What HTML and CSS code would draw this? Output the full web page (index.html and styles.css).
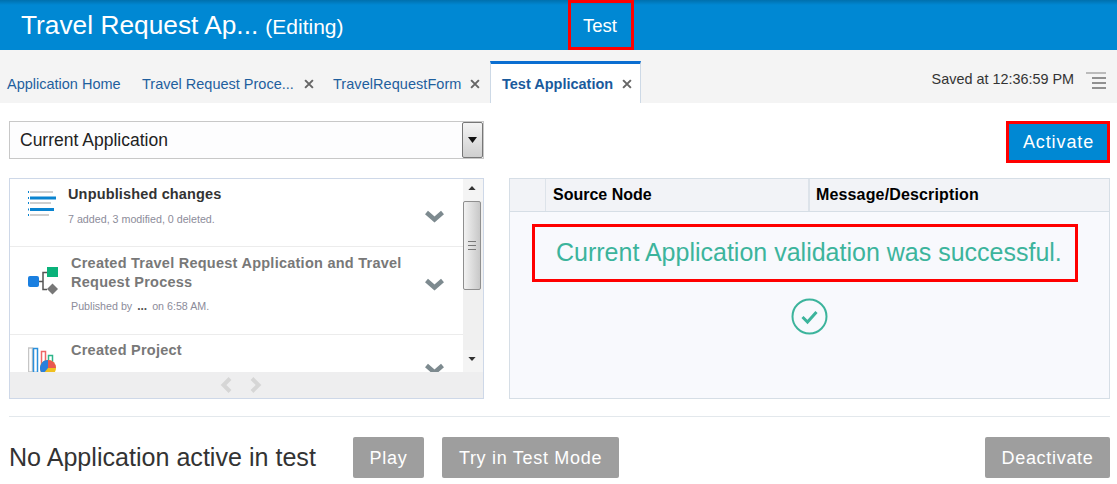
FILE: index.html
```html
<!DOCTYPE html>
<html lang="en">
<head>
<meta charset="utf-8">
<title>Test Application</title>
<link rel="stylesheet" href="styles.css">
</head>
<body>
<header class="appbar">
  <div class="appbar-title"><span class="app-name">Travel Request Ap...</span><span class="app-state">(Editing)</span></div>
  <div class="appbar-test">Test</div>
</header>
<nav class="tabs">
  <a class="tab tab-home">Application Home</a>
  <a class="tab tab-process">Travel Request Proce...<svg class="tab-x" viewBox="0 0 9 9"><path d="M1 1l7 7M8 1l-7 7"/></svg></a>
  <a class="tab tab-form">TravelRequestForm<svg class="tab-x" viewBox="0 0 9 9"><path d="M1 1l7 7M8 1l-7 7"/></svg></a>
  <a class="tab tab-active">Test Application<svg class="tab-x" viewBox="0 0 9 9"><path d="M1 1l7 7M8 1l-7 7"/></svg></a>
  <div class="tabs-right">
    <span class="saved">Saved at 12:36:59 PM</span>
    <svg class="menu-icon" width="20" height="17" viewBox="0 0 20 17"><path class="menu-top" d="M0 1h20"/><path d="M6 6h14M6 11h14M6 16h14"/></svg>
  </div>
</nav>
<main class="content">
  <div class="top-row">
    <div class="select">
      <span class="select-text">Current Application</span>
      <span class="select-btn"><svg width="9" height="6" viewBox="0 0 9 6"><path d="M0 0h9L4.500 6z"/></svg></span>
    </div>
    <button class="activate">Activate</button>
  </div>
  <div class="panels">
    <section class="history">
      <div class="history-body">
        <div class="history-list">
          <div class="item item-first">
            <svg class="item-icon" width="29" height="26" viewBox="0 0 29 26">
              <path class="l-g" d="M2 1h23M2 12h21M2 24h19"/>
              <path class="l-b" d="M2 7h26M2 18.500h24"/>
              <path class="l-d" d="M0 1h1M0 7h1M0 12h1M0 18.500h1M0 24h1"/>
            </svg>
            <div class="item-text">
              <h3 class="item-title item-title-dark">Unpublished changes</h3>
              <p class="item-sub">7 added, 3 modified, 0 deleted.</p>
            </div>
            <svg class="chev" width="21" height="13" viewBox="0 0 21 13"><path d="M2.500 2.500l8 7 8-7"/></svg>
          </div>
          <div class="item item-second">
            <svg class="item-icon" width="30" height="29" viewBox="0 0 30 29">
              <path class="conn" d="M11 14.500H15V5.500H19M15 14.500V22.500H19"/>
              <rect x="0" y="9" width="11" height="11" rx="2" fill="#1a7fe0"/>
              <rect x="19" y="0" width="11" height="10" fill="#0ab27a"/>
              <path d="M24.500 16.500l5.500 5.500-5.500 5.500-5.500-5.500z" fill="#777"/>
            </svg>
            <div class="item-text">
              <h3 class="item-title">Created Travel Request Application and Travel Request Process</h3>
              <p class="item-sub item-sub-pub">Published by <b class="dots">...</b> on 6:58 AM.</p>
            </div>
            <svg class="chev chev-second" width="21" height="13" viewBox="0 0 21 13"><path d="M2.500 2.500l8 7 8-7"/></svg>
          </div>
          <div class="item item-third">
            <svg class="item-icon" width="30" height="29" viewBox="0 0 30 29">
              <path class="bar-g" d="M.500 1h4v24h-4z"/>
              <path class="bar-b" d="M5.500 1.500h4v24h-4z"/>
              <path class="bar-r" d="M13.500 4.500h4v20h-4z"/>
              <path class="bar-t" d="M20.500 8.500h4v16h-4z"/>
              <circle cx="20" cy="21" r="8" fill="#f0c020"/>
              <path d="M20 21V13a8 8 0 0 1 8 8z" fill="#e9574f"/>
              <path d="M20 13a8 8 0 0 0-5 14.200L20 21z" fill="#2a7fdc"/>
            </svg>
            <div class="item-text">
              <h3 class="item-title">Created Project</h3>
            </div>
            <svg class="chev chev-third" width="21" height="13" viewBox="0 0 21 13"><path d="M2.500 2.500l8 7 8-7"/></svg>
          </div>
        </div>
        <div class="scrollbar">
          <span class="sb-arrow"><svg width="8" height="4" viewBox="0 0 9 5"><path d="M4.500 0L9 5H0z"/></svg></span>
          <span class="sb-thumb"><svg width="8" height="9" viewBox="0 0 8 9"><path d="M0 .5h8M0 4.500h8M0 8.500h8"/></svg></span>
          <span class="sb-track"></span>
          <span class="sb-arrow"><svg width="8" height="4" viewBox="0 0 9 5"><path d="M0 0h9L4.500 5z"/></svg></span>
        </div>
      </div>
      <div class="history-foot">
        <svg width="14" height="18" viewBox="0 0 14 18"><path d="M11 2.500L4.500 9l6.500 6.500"/></svg>
        <svg width="14" height="18" viewBox="0 0 14 18"><path d="M3 2.500L9.500 9 3 15.500"/></svg>
      </div>
    </section>
    <section class="results">
      <div class="results-head">
        <div class="col col-blank"></div>
        <div class="col col-source">Source Node</div>
        <div class="col col-message">Message/Description</div>
      </div>
      <div class="results-body">
        <div class="success-msg">Current Application validation was successful.</div>
        <svg class="success-icon" width="37" height="37" viewBox="0 0 37 37"><circle cx="18.500" cy="18.500" r="17"/><path class="tick" d="M11.500 19l5 5 9-10"/></svg>
      </div>
    </section>
  </div>
  <div class="bottom-row">
    <span class="no-app">No Application active in test</span>
    <button class="gray-btn btn-play">Play</button>
    <button class="gray-btn btn-try">Try in Test Mode</button>
    <button class="gray-btn btn-deactivate">Deactivate</button>
  </div>
</main>
</body>
</html>
```
FILE: styles.css
```css
* { box-sizing: border-box; }
html, body { margin: 0; padding: 0; }
body { width: 1117px; height: 484px; overflow: hidden; background: #fff; font-family: "Liberation Sans", Arial, sans-serif; }

.appbar { height: 50px; display: flex; background: linear-gradient(#0070ad 0, #0088d3 5px, #0088d3 100%); color: #fff; }
.appbar-title { width: 568px; padding: 10px 0 0 21px; display: flex; align-items: baseline; white-space: nowrap; }
.app-name { font-size: 26.300px; }
.app-state { font-size: 21px; margin-left: 7px; }
.appbar-test { width: 66px; height: 50px; border: 3px solid #f00; font-size: 18.500px; padding: 1px 2px 0 0; display: flex; align-items: center; justify-content: center; }

.tabs { height: 53px; background: #f4f4f4; display: flex; align-items: flex-end; position: relative; }
.tab { height: 42px; padding-top: 4px; display: flex; align-items: center; font-size: 14.500px; color: #1f5f9e; white-space: nowrap; }
.tab-home { margin-left: 7px; width: 135px; }
.tab-process { width: 191px; }
.tab-form { width: 157px; letter-spacing: .05px; }
.tab-active { width: 151px; padding: 0 0 0 11px; background: #fff; border-top: 3px solid #0a6ed1; border-left: 1px solid #cdd9e6; border-right: 1px solid #cdd9e6; font-weight: bold; color: #195a9c; }
.tab-x { width: 10px; height: 10px; margin-left: 9px; fill: none; stroke: #666; stroke-width: 1.800; }
.tab-process .tab-x { margin-left: 10px; }
.tabs-right { margin-left: auto; height: 53px; display: flex; align-items: flex-start; padding: 21px 11px 0 0; }
.saved { font-size: 14.400px; color: #333; line-height: 17px; }
.menu-icon { margin: 1px 0 0 12px; fill: none; stroke: #909090; stroke-width: 2; }
.menu-top { stroke: #bbb; }

.content { padding: 0 7px 0 9px; }
.top-row { height: 75px; display: flex; justify-content: space-between; align-items: flex-start; padding-top: 18px; }
.select { width: 475px; height: 38px; border: 1px solid #c8c8c8; background: #fdfdfe; display: flex; align-items: center; justify-content: space-between; padding-left: 10px; }
.select-text { font-size: 17.500px; color: #222; }
.select-btn { width: 21px; height: 36px; border: 1px solid #777; border-radius: 2px; background: linear-gradient(#f4f4f4, #cfcfcf); display: flex; align-items: center; justify-content: center; }
.select-btn svg path { fill: #111; }
.activate { width: 104px; height: 42px; border: 3px solid #f00; background: #0088d3; color: #fff; font: 18px "Liberation Sans", Arial, sans-serif; letter-spacing: .9px; padding: 0 0 0 1px; }

.panels { display: flex; justify-content: space-between; height: 221px; }
.history { width: 475px; border: 1px solid #ced8e8; display: flex; flex-direction: column; }
.history-body { height: 193px; display: flex; overflow: hidden; }
.history-list { flex: 1; min-width: 0; }
.item { position: relative; display: flex; border-bottom: 1px solid #ececec; padding-left: 18px; }
.item-first { height: 68px; }
.item-second { height: 88px; }
.item-third { height: 60px; border-bottom: 0; }
.item-icon { flex: none; }
.item-first .item-icon { margin-top: 12px; }
.item-second .item-icon { margin-top: 20px; }
.item-third .item-icon { margin-top: 12px; }
.l-g, .l-b, .l-d { fill: none; }
.l-g { stroke: #cfcfcf; stroke-width: 2; }
.l-b { stroke: #0a84d0; stroke-width: 3; }
.l-d { stroke: #0a84d0; stroke-width: 2; }
.conn { fill: none; stroke: #555; stroke-width: 1.500; }
.bar-g, .bar-b, .bar-r, .bar-t { fill: none; stroke-width: 1.500; }
.bar-g { stroke: #c5c5c5; }
.bar-b { stroke: #2a8fdc; }
.bar-r { stroke: #e66; }
.bar-t { stroke: #2db58a; }
.item-text { padding-left: 13px; width: 372px; }
.item-first .item-text { padding-left: 11px; }
.item-title { margin: 0; font-size: 14.500px; line-height: 19px; font-weight: bold; color: #787878; padding-top: 6px; letter-spacing: .25px; }
.item-title-dark { color: #333; padding-top: 6px; letter-spacing: .15px; }
.item-second .item-title { padding-top: 7px; }
.item-sub { margin: 8px 0 0; font-size: 10.700px; line-height: 14px; color: #8c8c9a; }
.item-sub-pub { margin-top: 7px; }
.dots { font-size: 12px; color: #555; margin: 0 2px; }
.chev { position: absolute; right: 18px; top: 31px; fill: none; stroke: #7d8a8f; stroke-width: 4.500; }
.chev-second { top: 31px; }
.chev-third { top: 28px; }
.scrollbar { width: 20px; flex: none; background: #f0f0f0; display: flex; flex-direction: column; align-items: center; }
.sb-arrow { height: 22px; width: 100%; background: #f4f4f4; display: flex; align-items: center; justify-content: center; flex: none; padding: 0 2px 4px 0; }
.sb-arrow svg path { fill: #333; }
.sb-thumb { height: 89px; width: 18px; flex: none; margin-right: 2px; border: 1px solid #8f8f8f; border-radius: 2px; background: linear-gradient(90deg, #f2f2f2, #c8c8c8); display: flex; align-items: center; justify-content: center; }
.sb-thumb svg { fill: none; stroke: #777; }
.sb-track { flex: 1; }
.history-foot { flex: 1; background: #eeeeef; display: flex; align-items: center; justify-content: center; gap: 16px; padding-right: 12px; }
.history-foot svg { fill: none; stroke: #d6d6d6; stroke-width: 4; }

.results { width: 601px; border: 1px solid #d6dee6; background: #f8f9fd; }
.results-head { height: 33px; display: flex; background: #f2f3f7; border-bottom: 1px solid #d6dee6; font-size: 16px; font-weight: bold; color: #000; }
.col { display: flex; align-items: center; border-right: 2px solid #dde3ea; padding-left: 7px; }
.col-blank { width: 36px; border-right-width: 1px; }
.col-source { width: 264px; }
.col-message { flex: 1; border-right: 0; padding-left: 6px; letter-spacing: .15px; }
.results-body { display: flex; flex-direction: column; align-items: flex-start; }
.success-msg { margin: 12px 0 0 22px; width: 546px; height: 58px; border: 3px solid #f00; font-size: 25px; color: #3cb49c; padding: 0 0 2px 21px; display: flex; align-items: center; white-space: nowrap; }
.success-icon { margin: 16px 0 0 281px; fill: none; stroke: #3cb49c; stroke-width: 2; }
.tick { stroke-width: 3; }

.bottom-row { margin-top: 17px; border-top: 1px solid #e3e8ec; height: 68px; padding-top: 20px; display: flex; align-items: flex-start; }
.no-app { font-size: 25.100px; color: #333; width: 344px; line-height: 41px; }
.gray-btn { height: 41px; border: 0; border-radius: 2px; background: #9e9e9e; color: #fff; font: 18px "Liberation Sans", Arial, sans-serif; letter-spacing: .7px; padding: 2px 0 0; }
.btn-play { width: 71px; }
.btn-try { width: 177px; margin-left: 18px; }
.btn-deactivate { width: 125px; margin-left: auto; }
```
